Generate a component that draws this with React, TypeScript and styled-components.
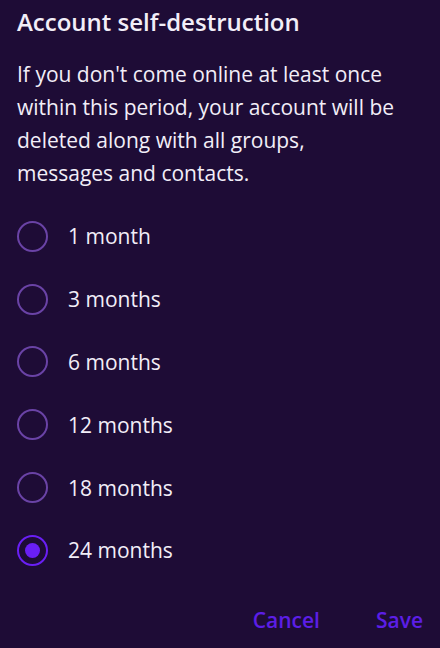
import styled, { createGlobalStyle } from 'styled-components';

const GlobalStyle = createGlobalStyle`
  html, body {
    margin: 0;
    background: #1e0c36;
  }
  body {
    font-family: "Open Sans", "Noto Sans", sans-serif;
    color: #f2eef8;
  }
`

const Dialog = styled.div`
  width: 440px;
  height: 648px;
  box-sizing: border-box;
  padding: 5px 17px 0 17px;
  display: flex;
  flex-direction: column;
`
const Title = styled.h2`
  margin: 0;
  font-size: 24px;
  font-weight: 600;
  line-height: 34px;
`
const Text = styled.p`
  margin: 19px 0 0;
  max-width: 382px;
  font-size: 21px;
  line-height: 33px;
`
const Options = styled.div`
  display: flex;
  flex-direction: column;
  margin-top: 15px;
`
const Option = styled.label`
  display: flex;
  align-items: center;
  gap: 20px;
  height: 62.8px;
  font-size: 21px;
  cursor: pointer;
`
const Radio = styled.span<{ $checked: boolean }>`
  width: 31px;
  height: 31px;
  box-sizing: border-box;
  border-radius: 50%;
  border: 2.5px solid ${p => (p.$checked ? '#6a1ff5' : '#6a43a6')};
  display: flex;
  align-items: center;
  justify-content: center;
  &::after {
    content: '';
    width: 15px;
    height: 15px;
    border-radius: 50%;
    background: #6a1ff5;
    display: ${p => (p.$checked ? 'block' : 'none')};
  }
`
const Buttons = styled.div`
  display: flex;
  justify-content: flex-end;
  gap: 56px;
  margin-top: 24px;
`
const Button = styled.button`
  background: none;
  border: none;
  padding: 0;
  font-family: inherit;
  font-size: 21px;
  font-weight: 600;
  color: #5c1ee6;
  cursor: pointer;
`

const periods = ['1 month', '3 months', '6 months', '12 months', '18 months', '24 months']

export default function App() {
  const selected = '24 months'
  return (
    <>
      <GlobalStyle />
      <Dialog>
        <Title>Account self-destruction</Title>
        <Text>
          If you don't come online at least once within this period, your account will be
          deleted along with all groups, messages and contacts.
        </Text>
        <Options>
          {periods.map(p => (
            <Option key={p}>
              <Radio $checked={p === selected} />
              {p}
            </Option>
          ))}
        </Options>
        <Buttons>
          <Button>Cancel</Button>
          <Button>Save</Button>
        </Buttons>
      </Dialog>
    </>
  )
}
